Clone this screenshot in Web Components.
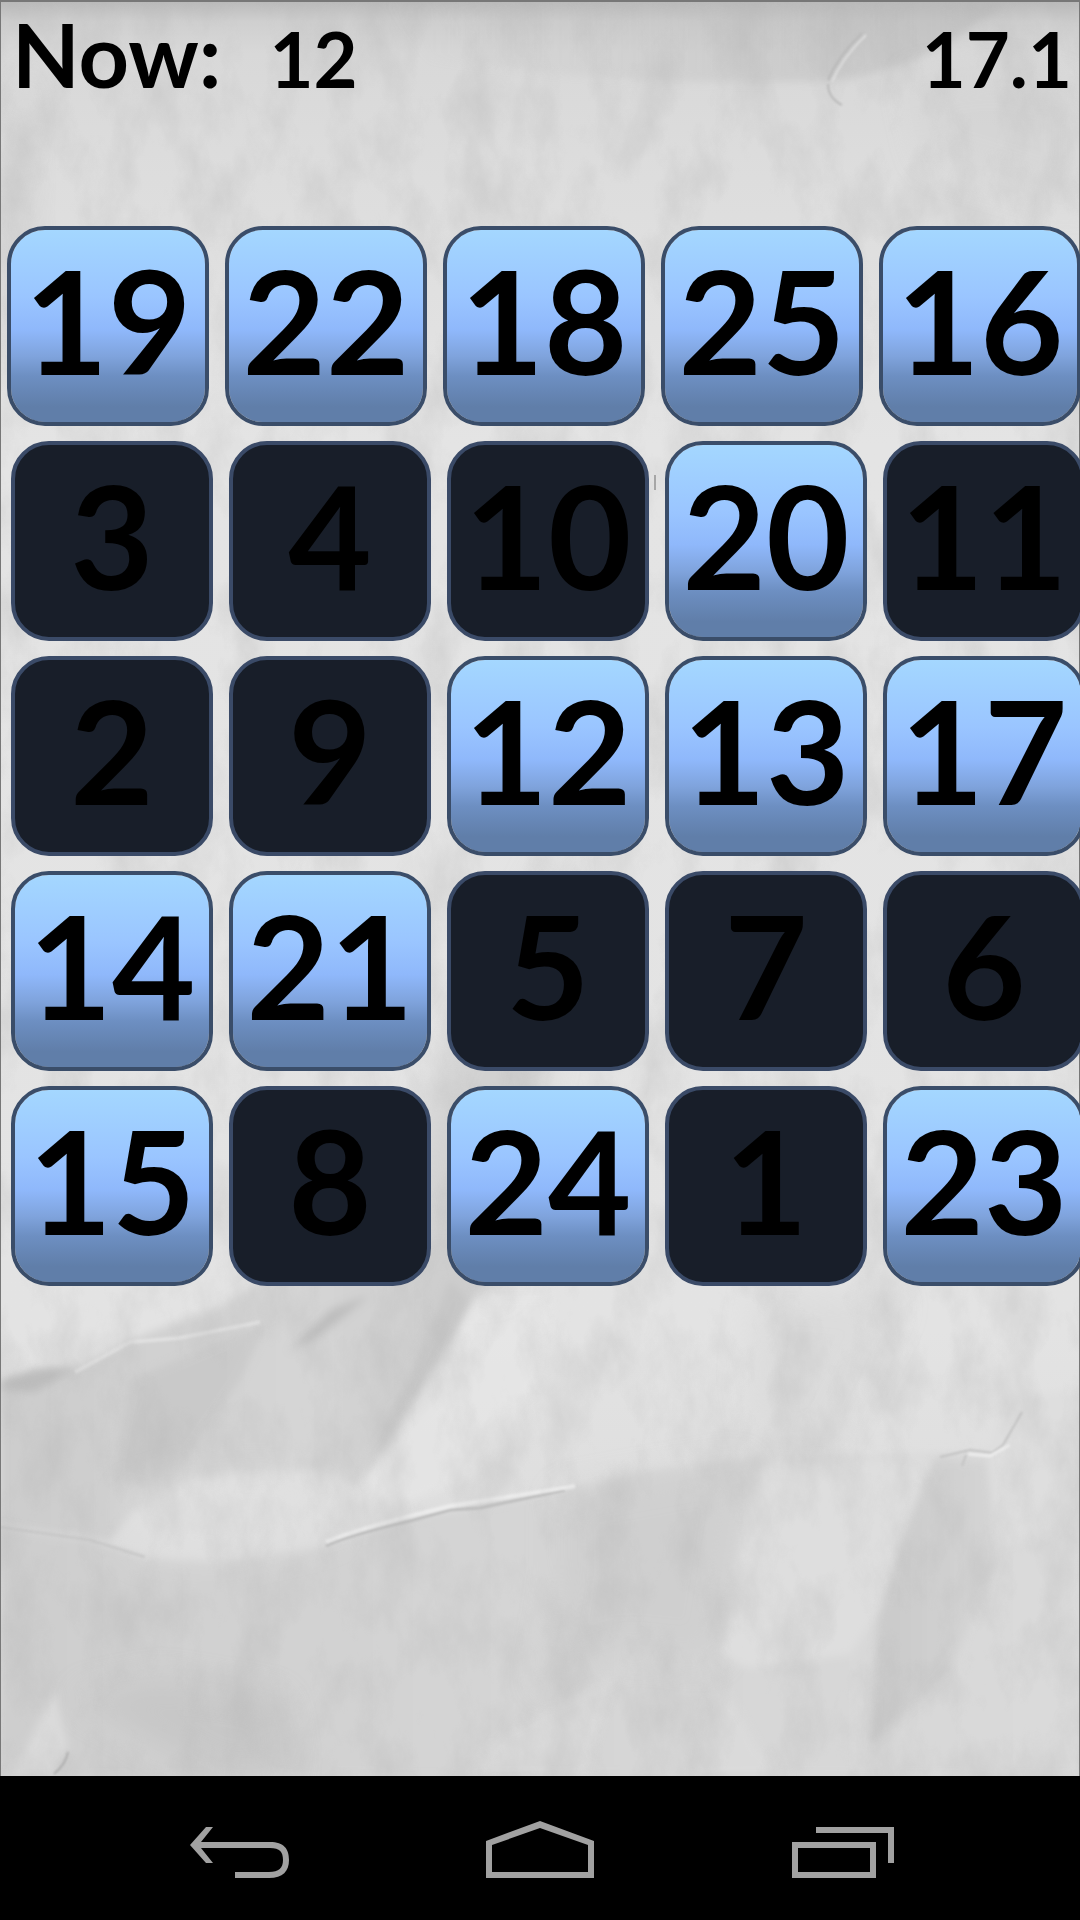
<!DOCTYPE html>
<html lang="en">
<head>
<meta charset="utf-8">
<meta name="viewport" content="width=device-width, initial-scale=1">
<title>Numbers</title>
<style>
    body {
        margin: 0;
        background-color: #000;
        font-family: "Lato", sans-serif;
    }
</style>
</head>
<body>
<number-game></number-game>

<script>
class PaperBackground extends HTMLElement {
    constructor() {
        super();
        this.attachShadow({ mode: "open" });
        this.shadowRoot.innerHTML = `
            <style>
                :host {
                    display: block;
                    position: absolute;
                    inset: 0;
                    background-color: #dedede;
                }

                svg {
                    display: block;
                    width: 100%;
                    height: 100%;
                }
            </style>
            <svg viewBox="0 0 1080 1776" preserveAspectRatio="none" aria-hidden="true">
                <defs>
                    <linearGradient id="base" x1="0" y1="0" x2="0" y2="1">
                        <stop offset="0" stop-color="#b9b9b9"/>
                        <stop offset=".012" stop-color="#cfcfcf"/>
                        <stop offset=".03" stop-color="#d8d8d8"/>
                        <stop offset=".1" stop-color="#dddddd"/>
                        <stop offset=".25" stop-color="#e4e4e4"/>
                        <stop offset=".75" stop-color="#e3e3e3"/>
                        <stop offset="1" stop-color="#d6d6d6"/>
                    </linearGradient>
                    <linearGradient id="fold" x1="0" y1="0" x2="1" y2="0">
                        <stop offset="0" stop-color="#cccccc"/>
                        <stop offset=".6" stop-color="#d5d5d5"/>
                        <stop offset="1" stop-color="#cbcbcb"/>
                    </linearGradient>
                    <linearGradient id="low" x1="0" y1="0" x2="1" y2="0">
                        <stop offset="0" stop-color="#cecece"/>
                        <stop offset=".5" stop-color="#d5d5d5"/>
                        <stop offset="1" stop-color="#dadada"/>
                    </linearGradient>
                    <linearGradient id="top" x1="0" y1="0" x2="1" y2="0">
                        <stop offset="0" stop-color="#bcbcbc" stop-opacity="0"/>
                        <stop offset="1" stop-color="#b8b8b8"/>
                    </linearGradient>
                    <linearGradient id="strip" x1="0" y1="0" x2="1" y2="0">
                        <stop offset="0" stop-color="#c6c6c6"/>
                        <stop offset="1" stop-color="#d4d4d4"/>
                    </linearGradient>
                    <filter id="thin" x="-20%" y="-20%" width="140%" height="140%">
                        <feGaussianBlur stdDeviation="1"/>
                    </filter>
                    <filter id="soft" x="-20%" y="-20%" width="140%" height="140%">
                        <feGaussianBlur stdDeviation="4"/>
                    </filter>
                    <filter id="softer" x="-40%" y="-40%" width="180%" height="180%">
                        <feGaussianBlur stdDeviation="16"/>
                    </filter>
                    <filter id="mottle" x="0" y="0" width="100%" height="100%">
                        <feTurbulence type="fractalNoise" baseFrequency=".022 .012" numOctaves="5" seed="7"/>
                        <feColorMatrix values="0 0 0 0 .45  0 0 0 0 .45  0 0 0 0 .45  1 0 0 0 -.4"/>
                    </filter>
                </defs>
                <rect width="1080" height="1776" fill="url(#base)"/>

                <!-- upper fold -->
                <path d="M380 0 L430 60 Q640 88 830 81 Q890 76 950 42 L1010 0 Z" fill="url(#top)" opacity=".6" filter="url(#soft)"/>
                <path d="M828 80 Q838 56 862 33 M828 84 Q828 98 842 105" fill="none" stroke="#bababa" stroke-width="2" filter="url(#thin)"/>
                <path d="M832 82 Q842 58 866 35" fill="none" stroke="#e4e4e4" stroke-width="2" filter="url(#thin)"/>
                <path d="M910 80 L928 160 L1080 205 V90 L1000 70 Z" fill="#d0d0d0" opacity=".5" filter="url(#softer)"/>
                <path d="M30 60 L0 200 V330 H40 Z" fill="#cfcfcf" opacity=".7" filter="url(#softer)"/>

                <!-- shade seen between the tiles -->
                <path d="M560 840 L430 1090 L400 1290 H500 L560 1000 Z" fill="#c6c6c6" opacity=".6" filter="url(#softer)"/>
                <path d="M655 475 V490" stroke="#666" stroke-width="1"/>

                <!-- left valley -->
                <path d="M0 1384 L40 1374 L82 1366 L135 1338 L215 1308 L260 1282 L340 1240 H500 L478 1292 L420 1390 L355 1486 L330 1470 L290 1472 L190 1480 L130 1515 L110 1542 L0 1526 Z" fill="url(#fold)" filter="url(#soft)"/>
                <path d="M268 1322 L130 1380 L112 1480 L165 1490 L240 1380 Z" fill="#c2c2c2" opacity=".5" filter="url(#soft)"/>
                <path d="M0 1382 L35 1368 L76 1368 L34 1392 L0 1388 Z M288 1352 L330 1310 L370 1295 L320 1336 Z" fill="#b7b7b7" opacity=".8" filter="url(#soft)"/>
                <path d="M75 1372 L130 1342 L180 1338 L260 1322" fill="none" stroke="#e6e6e6" stroke-width="4" filter="url(#thin)" opacity=".7"/>
                <path d="M468 1300 L440 1392 L358 1486 Q400 1400 450 1280 Z" fill="#bfbfbf" opacity=".5" filter="url(#soft)"/>
                <path d="M482 1295 H552 L540 1380 L470 1480 L390 1510 L366 1480 Z" fill="#e8e8e8" opacity=".6" filter="url(#soft)"/>
                <path d="M760 1290 L750 1380 L764 1452 L830 1440 L900 1300 Z" fill="#d7d7d7" opacity=".6" filter="url(#softer)"/>

                <!-- ground below the long crease -->
                <path d="M0 1527 L90 1540 L145 1557 L220 1561 L325 1546 L410 1519 L565 1491 L640 1472 L755 1458 L930 1455 L1080 1445 V1776 H0 Z" fill="url(#low)" filter="url(#soft)"/>
                <path d="M130 1500 Q200 1465 320 1480 L330 1530 L220 1556 L140 1550 Z" fill="#e0e0e0" filter="url(#softer)"/>
                <path d="M0 1527 L90 1540 L145 1557" fill="none" stroke="#c4c4c4" stroke-width="3" filter="url(#thin)" opacity=".7"/>
                <path d="M560 1495 L745 1462 L730 1560 L715 1660 L620 1650 L540 1690 L560 1580 Z" fill="#c9c9c9" opacity=".5" filter="url(#softer)"/>
                <path d="M760 1462 L742 1540 L722 1655 L745 1668 L850 1655 L880 1610 L905 1540 L930 1458 Z" fill="#dedede" filter="url(#soft)"/>
                <path d="M936 1458 L988 1462 L998 1560 L950 1670 L870 1745 L878 1620 L905 1530 Z" fill="url(#strip)" opacity=".8" filter="url(#soft)"/>
                <path d="M1000 1400 L988 1460 L1000 1550 L1080 1520 V1390 Z" fill="#dedede" filter="url(#soft)"/>
                <path d="M615 1674 L500 1736 L470 1776 H585 Z M715 1672 L690 1776 H790 L760 1750 Z" fill="#dbdbdb" opacity=".8" filter="url(#soft)"/>
                <path d="M75 1697 L150 1740 L220 1776 H290 L280 1700 L160 1680 Z" fill="#bebebe" opacity=".5" filter="url(#softer)"/>
                <path d="M55 1690 L30 1740 L10 1776 H52 L68 1745 Z" fill="#dadada" filter="url(#soft)"/>
                <path d="M68 1752 Q66 1764 54 1774" fill="none" stroke="#aeaeae" stroke-width="2" filter="url(#thin)"/>

                <!-- crease lines -->
                <path d="M326 1546 Q345 1536 410 1521 L450 1510 L480 1508 L565 1490" fill="none" stroke="#bebebe" stroke-width="3" filter="url(#thin)"/>
                <path d="M326 1542 Q345 1533 410 1516 L450 1506 L500 1498 L575 1486" fill="none" stroke="#ececec" stroke-width="4" filter="url(#thin)"/>
                <path d="M1022 1412 L1003 1445 L992 1453 L970 1450 L940 1457 M966 1455 L962 1466" fill="none" stroke="#c2c2c2" stroke-width="2" filter="url(#thin)"/>
                <path d="M1010 1445 L990 1456 L968 1454" fill="none" stroke="#ececec" stroke-width="3" filter="url(#thin)"/>

                <rect width="1080" height="1776" filter="url(#mottle)" opacity=".7"/>
                <path d="M0 1776 V1 H1080 V1776" fill="none" stroke="#777" stroke-width="2"/>
            </svg>
        `;
    }
}

class GameHeader extends HTMLElement {
    constructor() {
        super();
        this.attachShadow({ mode: "open" });
        this.shadowRoot.innerHTML = `
            <style>
                :host {
                    display: flex;
                    align-items: baseline;
                    justify-content: space-between;
                    box-sizing: border-box;
                    height: 226px;
                    padding: 4px 8px 0 12px;
                    font-size: 76px;
                    font-weight: bold;
                    line-height: 100px;
                    color: #000;
                }

                .now {
                    display: flex;
                    align-items: baseline;
                    gap: 48px;
                }

                .label {
                    font-size: 88px;
                }
            </style>
            <div class="now"><span class="label">Now:</span><slot name="now"></slot></div>
            <slot name="time"></slot>
        `;
    }
}

class NumberTile extends HTMLElement {
    constructor() {
        super();
        this.attachShadow({ mode: "open" });
        this.shadowRoot.innerHTML = `
            <style>
                :host {
                    display: block;
                    flex: 1 1 0;
                    min-width: 0;
                }

                button {
                    display: block;
                    width: 100%;
                    height: 200px;
                    box-sizing: border-box;
                    padding: 0 0 12px;
                    border: 4px solid #3a4d69;
                    border-radius: 38px;
                    background: linear-gradient(#a4d7ff, #9ac5ff 35%, #8fb8fb 52%, #7fa3dc 66%, #6d8fc2 76%, #607ea9 92%) padding-box;
                    color: #000;
                    font: inherit;
                    font-size: 144px;
                    font-weight: bold;
                    line-height: 180px;
                    text-align: center;
                    cursor: pointer;
                }

                button:disabled {
                    border-color: #3a4a67;
                    background: #181e29;
                    cursor: default;
                }
            </style>
            <button type="button"><slot></slot></button>
        `;
        this.button = this.shadowRoot.querySelector('button');
    }

    connectedCallback() {
        this.button.disabled = this.hasAttribute('done');
    }
}

class NumberBoard extends HTMLElement {
    constructor() {
        super();
        this.attachShadow({ mode: "open" });
    }

    connectedCallback() {
        const next = Number(this.getAttribute('next'));
        const rows = [
            [19, 22, 18, 25, 16],
            [3, 4, 10, 20, 11],
            [2, 9, 12, 13, 17],
            [14, 21, 5, 7, 6],
            [15, 8, 24, 1, 23]
        ];

        this.shadowRoot.innerHTML = `
            <style>
                :host {
                    display: flex;
                    flex-direction: column;
                    gap: 15px;
                }

                .row {
                    display: flex;
                    gap: 16px;
                    margin: 0 -5px 0 11px;
                }

                .row:first-of-type {
                    margin: 0 -1px 0 7px;
                }
            </style>
            ${rows.map(row => `
                <div class="row">
                    ${row.map(n => `<number-tile${n < next ? ' done' : ''}>${n}</number-tile>`).join('')}
                </div>
            `).join('')}
        `;
    }
}

class NavBar extends HTMLElement {
    constructor() {
        super();
        this.attachShadow({ mode: "open" });
        this.shadowRoot.innerHTML = `
            <style>
                :host {
                    display: flex;
                    height: 144px;
                    padding: 0 90px;
                    background-color: #000;
                }

                button {
                    flex: 1;
                    display: flex;
                    align-items: center;
                    justify-content: center;
                    padding: 0;
                    border: 0;
                    background: none;
                    cursor: pointer;
                }

                svg {
                    width: 108px;
                    height: 60px;
                    fill: #a1a1a1;
                    fill-rule: evenodd;
                }
            </style>
            <button type="button" aria-label="Back">
                <svg viewBox="0 0 108 60"><path d="M4 27 L20 9 H27 L15 24 H84 C98 24 103 31 103 42 S97 60 83 60 H49 V54 H83 C93 54 97 50 97 42 S94 30 84 30 H15 L27 45 H20 Z"/></svg>
            </button>
            <button type="button" aria-label="Home">
                <svg viewBox="0 0 108 60"><path d="M0 23 L54 3 L108 23 V60 H0 Z M6 27 V54 H102 V27 L54 10 Z"/></svg>
            </button>
            <button type="button" aria-label="Recent apps">
                <svg viewBox="0 0 108 60"><path d="M6 24 H90 V60 H6 Z M12 30 V54 H84 V30 Z M30 9 H108 V45 H102 V15 H30 Z"/></svg>
            </button>
        `;
    }
}

class NumberGame extends HTMLElement {
    constructor() {
        super();
        this.attachShadow({ mode: "open" });
        this.shadowRoot.innerHTML = `
            <style>
                :host {
                    display: flex;
                    flex-direction: column;
                    min-height: 100vh;
                }

                main {
                    flex: 1;
                    position: relative;
                    overflow: hidden;
                }

                .content {
                    position: relative;
                }
            </style>
            <main>
                <paper-background></paper-background>
                <div class="content">
                    <game-header>
                        <span slot="now">12</span>
                        <span slot="time">17.1</span>
                    </game-header>
                    <number-board next="12"></number-board>
                </div>
            </main>
            <nav-bar></nav-bar>
        `;
    }
}

customElements.define('paper-background', PaperBackground);
customElements.define('game-header', GameHeader);
customElements.define('number-tile', NumberTile);
customElements.define('number-board', NumberBoard);
customElements.define('nav-bar', NavBar);
customElements.define('number-game', NumberGame);
</script>
</body>
</html>
